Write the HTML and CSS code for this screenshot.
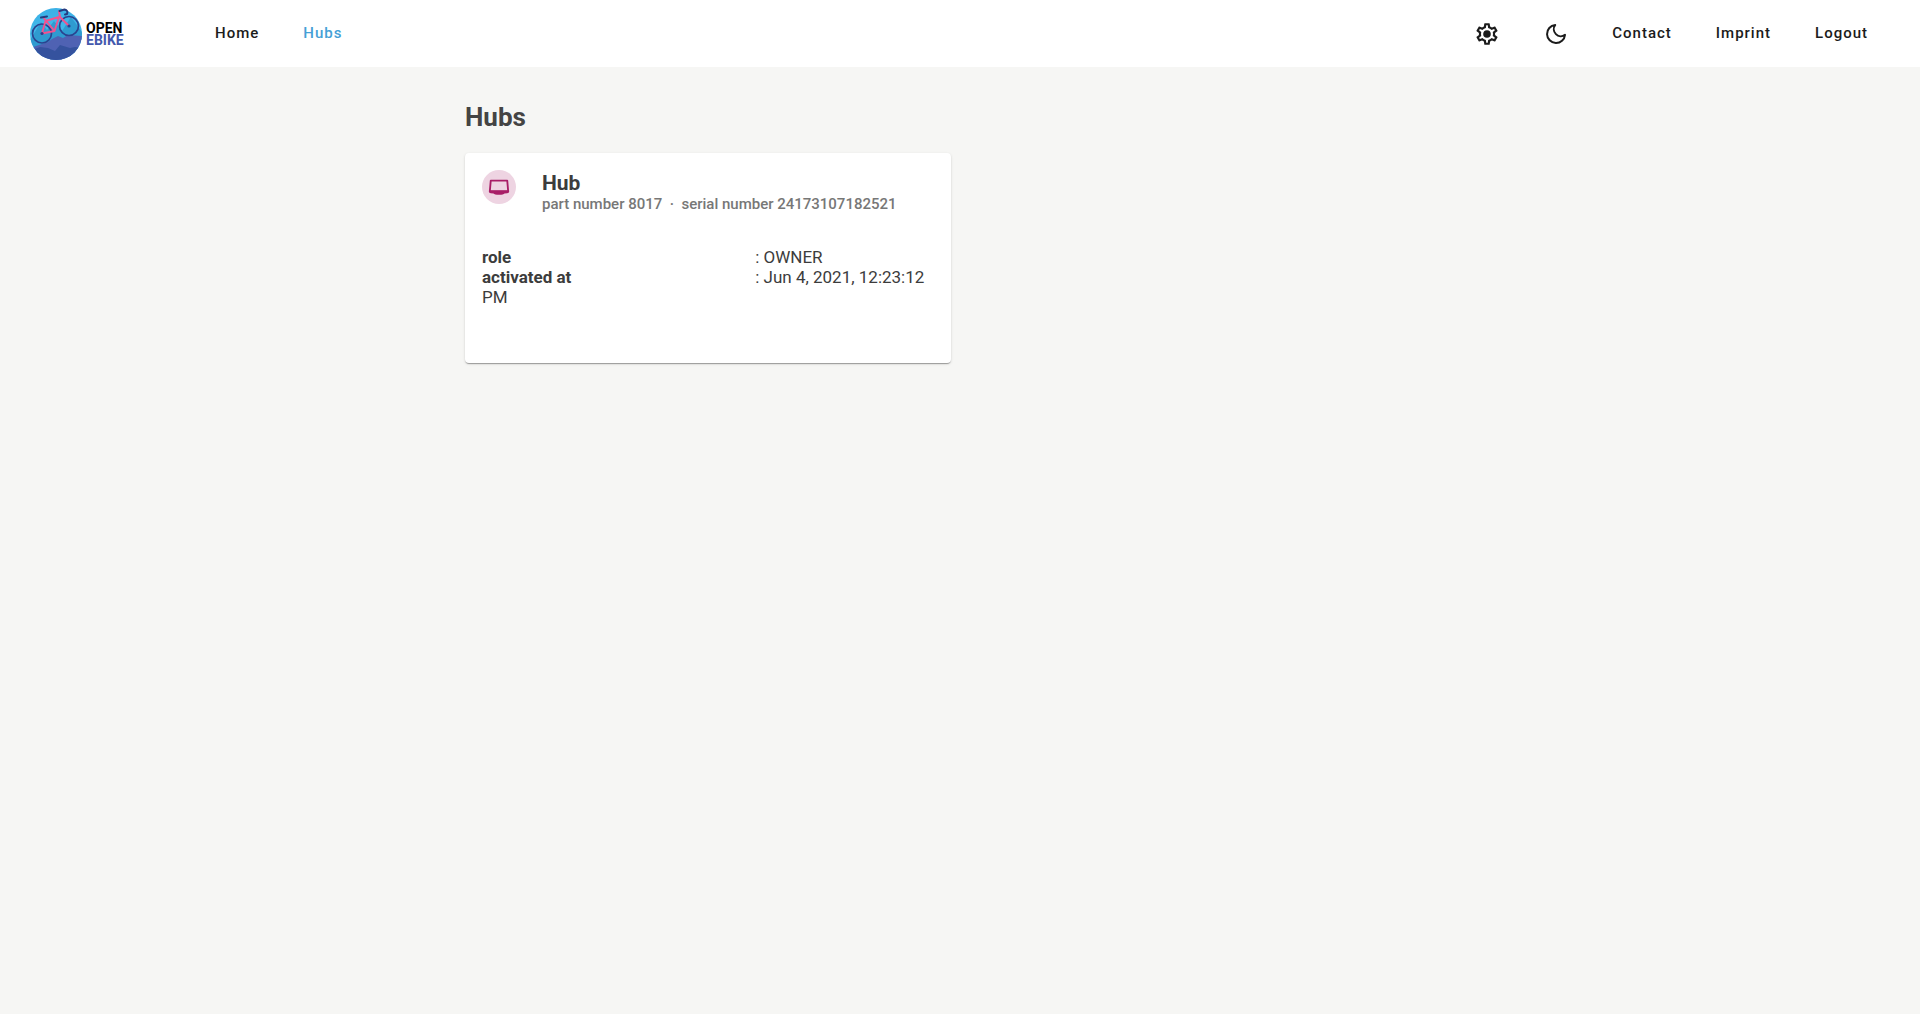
FILE: index.html
```html
<!DOCTYPE html>
<html lang="en">
<head>
<meta charset="utf-8">
<meta name="viewport" content="width=device-width, initial-scale=1">
<title>Open eBike – Hubs</title>
<link rel="stylesheet" href="styles.css">
</head>
<body>
<header class="header">
  <a class="logo" href="#">
    <svg class="logo-mark" viewBox="0 0 52 52" aria-hidden="true">
      <defs>
        <linearGradient id="sky" x1="0" y1="0" x2="0" y2="1">
          <stop offset="0" stop-color="#3bb0e6"/>
          <stop offset="1" stop-color="#4cc4ee"/>
        </linearGradient>
        <clipPath id="disc"><circle cx="26" cy="26" r="26"/></clipPath>
      </defs>
      <g clip-path="url(#disc)">
        <rect width="52" height="52" fill="url(#sky)"/>
        <path d="M0 32 11 14l6 8 7-9 8 10 9-14 11 15v24H0z" fill="#2f9bd0"/>
        <path d="M0 40l9-3 9-3 4-3 6-3 5 2 5-3 14 1v24H0z" fill="#4f62b3"/>
        <path d="M0 44l5-3 5-2 8 1 7 3 5-6 10 3 5-1 7 1v12H0z" fill="#35529e"/>
      </g>
      <g fill="none" stroke-linecap="round" stroke-linejoin="round">
        <circle cx="12" cy="25.500" r="9.500" stroke="#2b438f" stroke-width="1.700"/>
        <circle cx="39" cy="18" r="9.500" stroke="#2b438f" stroke-width="1.700"/>
        <path d="M12 25.500l3.500-12.500L29 9l-4.500 14L14 10.500M12 25.500L24.500 23M39 18L30 9l-1-5.500" stroke="#f2528f" stroke-width="1.900"/>
        <path d="M11 9.500l6-1M29.500 3l5-1.500q4 1 2.500 4.500l-2 .5" stroke="#263b80" stroke-width="2"/>
      </g>
      <g fill="#2b438f"><circle cx="12" cy="25.500" r="1.600"/><circle cx="39" cy="18" r="1.600"/></g>
    </svg>
    <span class="logo-text">OPEN<span class="logo-accent">EBIKE</span></span>
  </a>
  <nav class="nav nav-main" aria-label="Main">
    <a href="#">Home</a>
    <a href="#" class="active" aria-current="page">Hubs</a>
  </nav>
  <nav class="nav nav-side" aria-label="Account">
    <button type="button" class="icon-button" aria-label="Settings">
      <svg class="icon-large" viewBox="0 0 24 24" aria-hidden="true"><path fill="currentColor" d="M19.43 12.98c.04-.32.07-.64.07-.98 0-.34-.03-.66-.07-.98l2.11-1.65c.19-.15.24-.42.12-.64l-2-3.46c-.09-.16-.26-.25-.44-.25-.06 0-.12.01-.17.03l-2.49 1c-.52-.4-1.08-.73-1.69-.98l-.38-2.65C14.46 2.18 14.25 2 14 2h-4c-.25 0-.46.18-.49.42l-.38 2.65c-.61.25-1.17.59-1.69.98l-2.49-1c-.06-.02-.12-.03-.18-.03-.17 0-.34.09-.43.25l-2 3.46c-.13.22-.07.49.12.64l2.11 1.65c-.04.32-.07.65-.07.98 0 .33.03.66.07.98l-2.11 1.65c-.19.15-.24.42-.12.64l2 3.46c.09.16.26.25.44.25.06 0 .12-.01.17-.03l2.49-1c.52.4 1.08.73 1.69.98l.38 2.65c.03.24.24.42.49.42h4c.25 0 .46-.18.49-.42l.38-2.65c.61-.25 1.17-.59 1.69-.98l2.49 1c.06.02.12.03.18.03.17 0 .34-.09.43-.25l2-3.46c.12-.22.07-.49-.12-.64l-2.11-1.65zm-1.98-1.71c.04.31.05.52.05.73 0 .21-.02.43-.05.73l-.14 1.13.89.7 1.08.84-.7 1.21-1.27-.51-1.04-.42-.9.68c-.43.32-.84.56-1.25.73l-1.06.43-.16 1.13-.2 1.35h-1.4l-.19-1.35-.16-1.13-1.06-.43c-.43-.18-.83-.41-1.23-.71l-.91-.7-1.06.43-1.27.51-.7-1.21 1.08-.84.89-.7-.14-1.13c-.03-.31-.05-.54-.05-.74s.02-.43.05-.73l.14-1.13-.89-.7-1.08-.84.7-1.21 1.27.51 1.04.42.9-.68c.43-.32.84-.56 1.25-.73l1.06-.43.16-1.13.2-1.35h1.39l.19 1.35.16 1.13 1.06.43c.43.18.83.41 1.23.71l.91.7 1.06-.43 1.27-.51.7 1.21-1.07.85-.89.7.14 1.13z"/><circle cx="12" cy="12" r="3.500" fill="currentColor"/></svg>
    </button>
    <button type="button" class="icon-button" aria-label="Dark mode">
      <svg viewBox="0 0 24 24" aria-hidden="true"><path fill="none" stroke="currentColor" stroke-width="2" stroke-linejoin="round" d="M21 12.79A9 9 0 1 1 11.21 3 7 7 0 0 0 21 12.79z"/></svg>
    </button>
    <a href="#">Contact</a>
    <a href="#">Imprint</a>
    <a href="#">Logout</a>
  </nav>
</header>
<main class="content">
  <h1 class="title">Hubs</h1>
  <div class="cards">
    <article class="card">
      <header class="card-header">
        <span class="avatar">
          <svg viewBox="0 0 24 24" aria-hidden="true"><path fill="none" stroke="currentColor" stroke-width="2" stroke-linejoin="round" d="M3 5h18l1 11.500H2z"/><path fill="currentColor" d="M1 16h22v1.500q0 1-2 1.200l-3 .3q-1 1.500-6 1.500t-6-1.500l-3-.3q-2-.2-2-1.200z"/></svg>
        </span>
        <div>
          <h2 class="card-title">Hub</h2>
          <p class="card-subtitle">part number 8017 &nbsp;·&nbsp; serial number 24173107182521</p>
        </div>
      </header>
      <p class="details">
        <b class="label">role</b>: OWNER<br>
        <b class="label">activated at</b>: Jun 4, 2021, 12:23:12 PM
      </p>
    </article>
  </div>
</main>
</body>
</html>
```

FILE: styles.css
```css
* {
  box-sizing: border-box;
}

body {
  margin: 0;
  min-height: 100vh;
  background: #f6f6f4;
  color: #3c3c3c;
  font-family: Roboto, "Liberation Sans", sans-serif;
  font-size: 17px;
  line-height: 20px;
}

h1,
h2,
p {
  margin: 0;
}

.header {
  display: flex;
  align-items: center;
  height: 67px;
  padding: 0 52px 0 30px;
  background: #fff;
  color: #1b1b1b;
}

.logo {
  display: flex;
  align-items: center;
  gap: 4px;
  width: 185px;
  color: #000;
  text-decoration: none;
}

.logo-mark {
  width: 52px;
  height: 52px;
}

.logo-text {
  font-size: 14px;
  font-weight: 700;
  line-height: 12px;
}

.logo-accent {
  display: block;
  color: #4459ad;
}

.nav {
  display: flex;
  align-items: center;
  gap: 44px;
  font-size: 15px;
  font-weight: 500;
  letter-spacing: 1px;
}

.nav a {
  padding-bottom: 2px;
  color: inherit;
  text-decoration: none;
}

.nav .active {
  color: #459fd6;
}

.nav-side {
  margin-left: auto;
}

.icon-button {
  padding: 0;
  border: 0;
  background: none;
  color: inherit;
}

.icon-button svg {
  display: block;
  width: 24px;
  height: 24px;
}

.icon-button .icon-large {
  width: 26px;
  height: 26px;
}

.content {
  max-width: 990px;
  margin: 0 auto;
  padding-top: 35px;
}

.title {
  font-size: 26px;
  font-weight: 700;
  line-height: 30px;
  color: #444;
}

.cards {
  display: grid;
  grid-template-columns: 1fr 1fr;
  gap: 18px;
  margin-top: 21px;
}

.card {
  min-height: 210px;
  padding: 17px;
  border-radius: 4px;
  background: #fff;
  box-shadow: 0 2px 1px -1px rgba(0, 0, 0, 0.2), 0 1px 1px rgba(0, 0, 0, 0.14), 0 1px 3px rgba(0, 0, 0, 0.12);
}

.card-header {
  display: flex;
  gap: 26px;
}

.avatar {
  display: grid;
  place-items: center;
  width: 34px;
  height: 34px;
  border-radius: 50%;
  background: #eed4e2;
  color: #a81e67;
}

.avatar svg {
  width: 22px;
  height: 22px;
}

.card-title {
  font-size: 21px;
  font-weight: 700;
  line-height: 26px;
}

.card-subtitle {
  font-size: 15px;
  font-weight: 500;
  line-height: 16px;
  color: #777;
}

.details {
  margin-top: 35px;
}

.label {
  display: inline-block;
  width: 60%;
  margin-right: 2px;
}
```
